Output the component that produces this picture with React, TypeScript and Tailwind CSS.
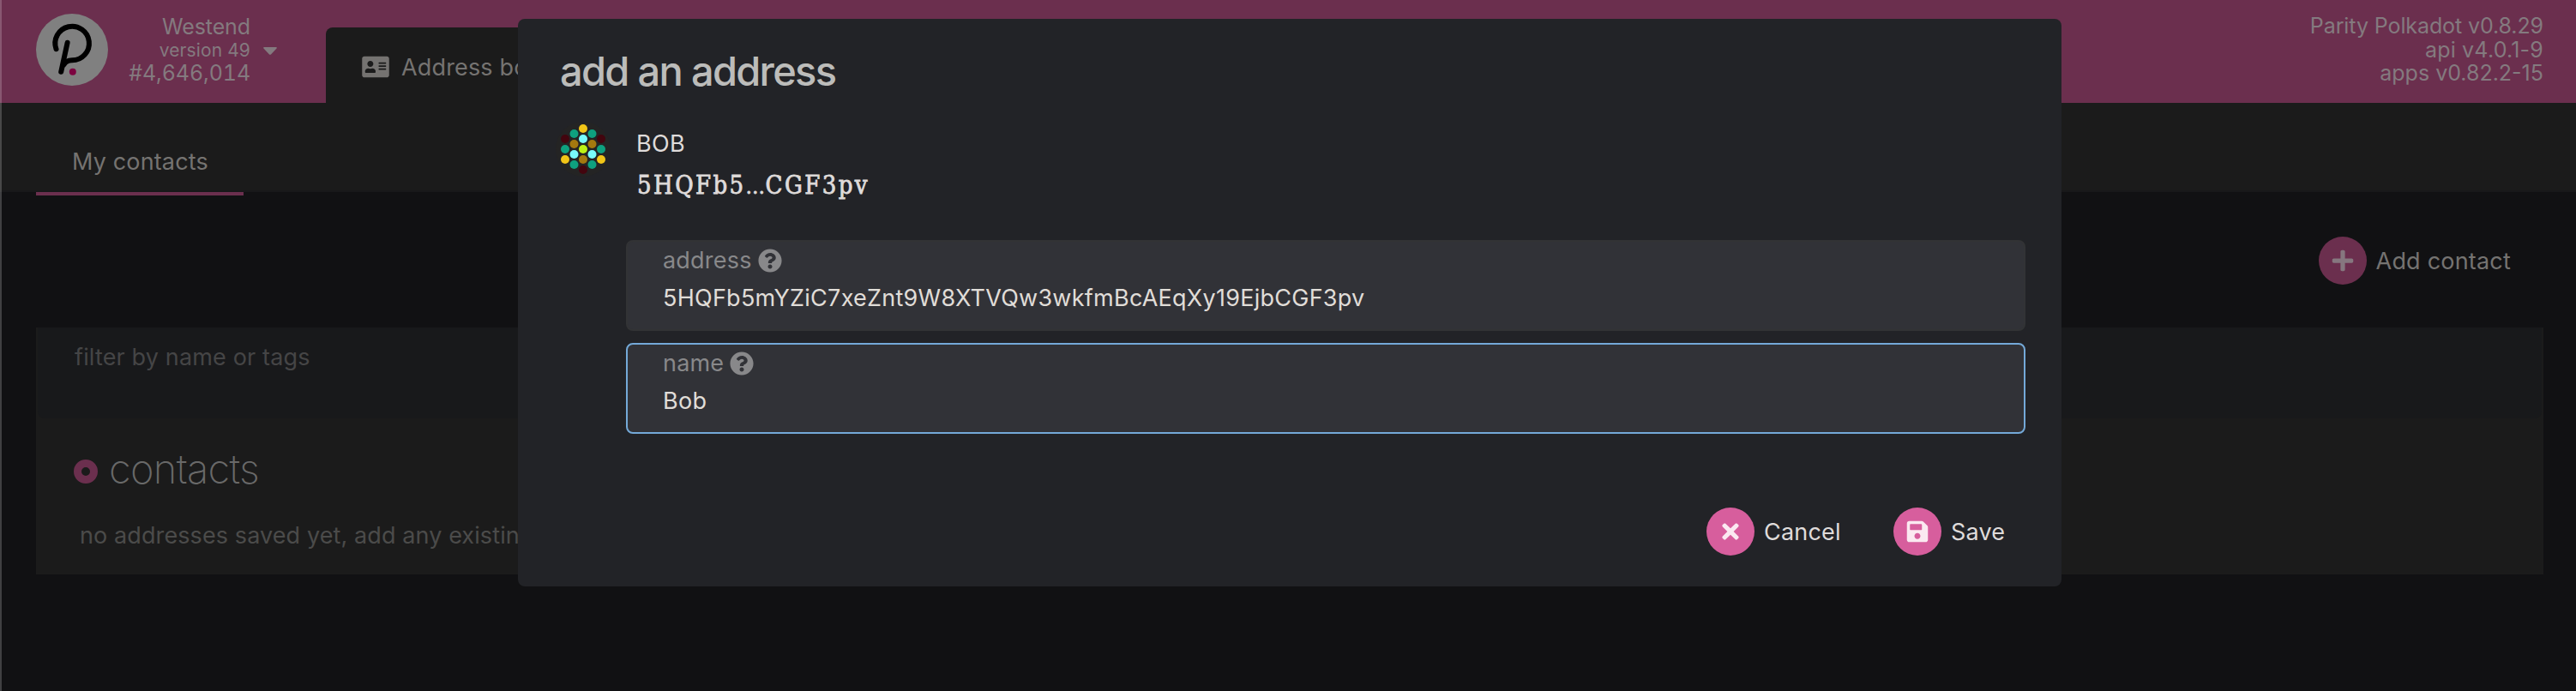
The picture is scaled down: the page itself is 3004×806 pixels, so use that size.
import type { ReactNode } from "react";
import { FaAddressCard, FaPlus, FaQuestionCircle, FaSave, FaTimes } from "react-icons/fa";

function Logo() {
  return (
    <svg viewBox="0 0 84 84" className="mt-4 size-[84px] shrink-0" fill="none">
      <circle cx="42" cy="42" r="42" fill="#808080" />
      <g stroke="#000" strokeWidth="6" strokeLinecap="round">
        <path d="M23.5 41.2A19.8 19.8 0 1 1 42 54.3C38 54.3 34.500 55.500 32.500 59.500" />
        <path d="M36.600 33.800L29.200 67.800" />
      </g>
      <circle cx="42.800" cy="67.700" r="4" fill="#7c0340" />
    </svg>
  );
}

const DOTS: [number, number, string][] = [
  [32, 8, "#f1c517"],
  [21.5, 14, "#0ea17f"],
  [42.5, 14, "#0ea17f"],
  [11, 20, "#43050e"],
  [32, 20, "#78fbfb"],
  [53, 20, "#43050e"],
  [21.5, 26, "#a4790f"],
  [42.5, 26, "#a4790f"],
  [11, 32, "#0ea17f"],
  [32, 32, "#bdf215"],
  [53, 32, "#0ea17f"],
  [21.5, 38, "#78fbfb"],
  [42.5, 38, "#78fbfb"],
  [11, 44, "#f1c517"],
  [32, 44, "#a4790f"],
  [53, 44, "#f1c517"],
  [21.5, 50, "#0ea17f"],
  [42.5, 50, "#0ea17f"],
  [32, 56, "#43050e"],
];

function Identicon() {
  return (
    <svg viewBox="0 0 64 64" className="size-16 shrink-0">
      <circle cx="32" cy="32" r="32" fill="#242424" />
      {DOTS.map(([x, y, fill]) => (
        <circle key={`${x}-${y}`} cx={x} cy={y} r="5" fill={fill} />
      ))}
    </svg>
  );
}

function Header() {
  return (
    <header className="flex h-[120px] items-start bg-[#6b2f4e] pr-[38px] pl-[42px] text-[25px] text-[#847a7f]">
      <Logo />
      <div className="flex w-[166px] flex-col items-end pt-[17px]">
        <span className="leading-[28px] tracking-[-0.1px]">Westend</span>
        <span className="pt-px text-[21px] leading-[25px] tracking-[0.1px]">version 49</span>
        <span className="leading-[28px] tracking-[-0.1px] tabular-nums">#4,646,014</span>
      </div>
      <svg viewBox="0 0 16 9" className="mt-[55px] ml-[15px] h-[9px] w-4">
        <path d="M1 0H15Q16.400 0.300 15.500 1.500L9 8.400Q8 9.300 7 8.400L0.500 1.500Q-0.400 0.300 1 0Z" fill="#847a7f" />
      </svg>
      <div className="mt-8 ml-[57px] flex h-[88px] w-[280px] items-center gap-[14px] rounded-t-lg bg-[#1b1b1b] pt-1 pl-[42px] text-[27px] tracking-[0.15px] text-[#757371]">
        <FaAddressCard className="h-7 w-8" />
        <span className="pt-0.5 leading-8">Address book</span>
      </div>
      <div className="ml-auto flex flex-col items-end pt-[17px] leading-[27.5px]">
        <span className="tracking-[-0.1px]">Parity Polkadot v0.8.29</span>
        <span className="tracking-[0.2px]">api v4.0.1-9</span>
        <span>apps v0.82.2-15</span>
      </div>
    </header>
  );
}

function RoundButton({ icon, label, circle, className }: { icon: ReactNode; label: string; circle: string; className: string }) {
  return (
    <button className={`flex items-center gap-[11px] text-[27px] leading-8 tracking-[0.2px] ${className}`}>
      <span className={`flex size-14 items-center justify-center rounded-full text-[28px] ${circle}`}>{icon}</span>
      <span className="pt-0.5">{label}</span>
    </button>
  );
}

function Field({ label, value, focused }: { label: string; value: string; focused?: boolean }) {
  return (
    <div
      className={`h-[106px] rounded-lg border-2 bg-[#313237] pl-[41px] text-[27px] leading-[44px] ${
        focused ? "border-[#74a9d8]" : "border-[#323335]"
      }`}
    >
      <div className="flex items-center gap-[7px] tracking-[0.2px] text-[#88888a]">
        {label}
        <FaQuestionCircle className="size-7" />
      </div>
      <div className="tracking-[0.26px] text-[#e0ddd8]">{value}</div>
    </div>
  );
}

function Modal() {
  return (
    <div className="absolute top-[22px] left-[604px] h-[662px] w-[1800px] rounded-lg bg-[#222327] pt-[33px]">
      <h1 className="pl-[49px] text-[47px] leading-[56px] font-[450] tracking-[-1.7px] text-[#bcbcba]">add an address</h1>
      <div className="mt-[31px] flex gap-[30px] pl-11 text-[#dfdbda]">
        <Identicon />
        <div className="flex flex-col pt-[10px]">
          <span className="text-[27px] leading-8 tracking-[0.3px]">BOB</span>
          <span className="mt-3 pl-px font-['DejaVu_Serif_Condensed','DejaVu_Serif',serif] text-[29px] leading-10 tracking-[2.4px] [-webkit-text-stroke:0.8px_#dfdbda]">
            5HQFb5<span className="text-[25px] leading-none tracking-[0.5px]">…</span>CGF3pv
          </span>
        </div>
      </div>
      <div className="mt-11 flex flex-col gap-[14px] pr-[42px] pl-[126px]">
        <Field label="address" value="5HQFb5mYZiC7xeZnt9W8XTVQw3wkfmBcAEqXy19EjbCGF3pv" />
        <Field label="name" value="Bob" focused />
      </div>
      <div className="mt-[86px] flex pl-[1386px] text-[#dfdbda]">
        <RoundButton icon={<FaTimes />} label="Cancel" circle="bg-[#d75e9d] text-[#fbe9f1]" className="w-[218px]" />
        <RoundButton icon={<FaSave />} label="Save" circle="bg-[#d75e9d] text-[#fbe9f1]" className="" />
      </div>
    </div>
  );
}

export default function App() {
  return (
    <div className="relative h-[806px] w-[3004px] overflow-hidden bg-[#111113] font-['Inter',sans-serif] text-[27px]">
      <Header />
      <nav className="flex h-[104px] border-b-2 border-[#18181a] bg-[#1b1b1b]">
        <div className="ml-[42px] h-[108px] w-[242px] border-b-4 border-[#6b2f4e] pt-[53px] pl-[42px] leading-8 tracking-[0.15px] text-[#757371]">
          My contacts
        </div>
      </nav>
      <main className="pr-[38px] pl-[42px]">
        <div className="flex h-[158px] items-start justify-end pt-[52px] pr-[38px] text-[#757371]">
          <RoundButton icon={<FaPlus />} label="Add contact" circle="bg-[#6b2f4e] text-[#86777f]" className="" />
        </div>
        <section className="h-[288px] bg-[#1b1b1b]">
          <div className="mx-0.5 h-[106px] rounded-b-lg bg-[#18191b] pt-[15px] pl-[43px] leading-10 tracking-[0.15px] text-[#454546]">
            filter by name or tags
          </div>
          <div className="flex items-center gap-[13px] pt-[31px] pl-11">
            <span className="mt-1.5 size-7 rounded-full border-[9.5px] border-[#6b2f4e]" />
            <h2 className="text-[47px] leading-[56px] font-extralight tracking-[-0.7px] text-[#696969]">contacts</h2>
          </div>
          <p className="mt-[34px] pl-[51px] leading-8 tracking-[0.1px] text-[#4b4b4a]">
            no addresses saved yet, add any existing address
          </p>
        </section>
      </main>
      <Modal />
      <div className="absolute inset-y-0 left-0 w-0.5 bg-white/20" />
    </div>
  );
}
